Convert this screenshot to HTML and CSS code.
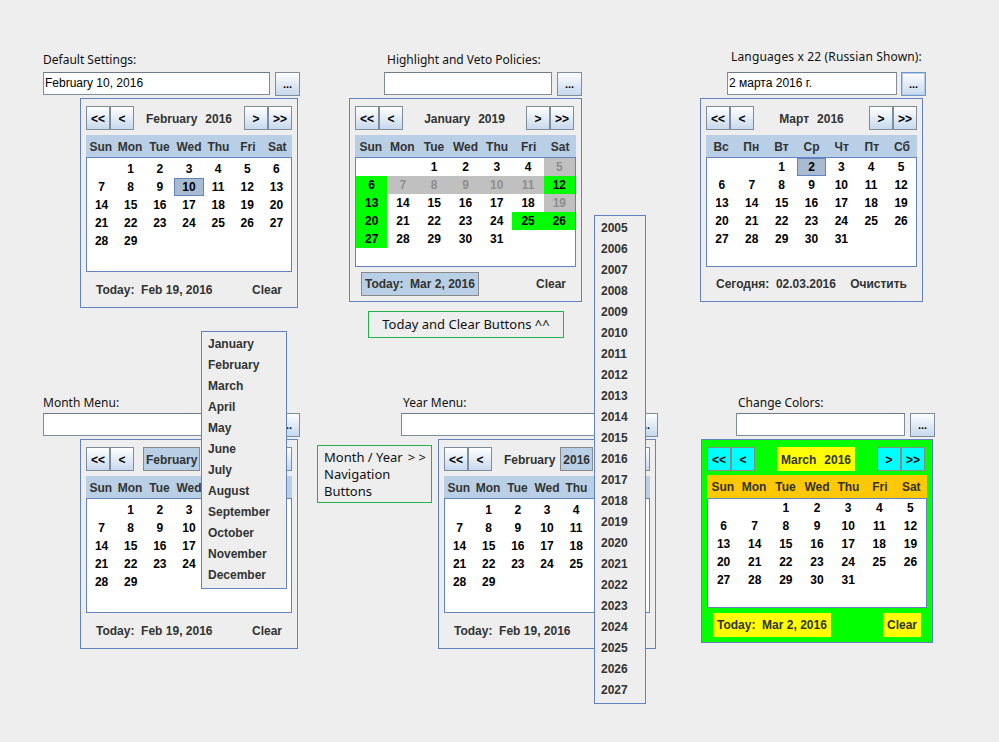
FILE: index.html
```html
<!DOCTYPE html>
<html lang="en">
<head>
<meta charset="utf-8">
<title>Date Picker Demo</title>
<link rel="stylesheet" href="styles.css">
</head>
<body>
<div class="row row1">
  <section class="demo d1">
    <div class="lbl">Default Settings:</div>
    <div class="fieldrow"><div class="field f227">February 10, 2016</div><div class="dots">...</div></div>
    <div class="cal tall w218 ml37">
      <div class="nav">
        <div class="navgrp"><div class="nb">&lt;&lt;</div><div class="nb">&lt;</div></div>
        <div class="my"><span>February</span><span>2016</span></div>
        <div class="navgrp"><div class="nb">&gt;</div><div class="nb">&gt;&gt;</div></div>
      </div>
      <div class="wk"><span>Sun</span><span>Mon</span><span>Tue</span><span>Wed</span><span>Thu</span><span>Fri</span><span>Sat</span></div>
      <div class="days">
        <span></span><span>1</span><span>2</span><span>3</span><span>4</span><span>5</span><span>6</span>
        <span>7</span><span>8</span><span>9</span><span class="sel">10</span><span>11</span><span>12</span><span>13</span>
        <span>14</span><span>15</span><span>16</span><span>17</span><span>18</span><span>19</span><span>20</span>
        <span>21</span><span>22</span><span>23</span><span>24</span><span>25</span><span>26</span><span>27</span>
        <span>28</span><span>29</span>
      </div>
      <div class="foot"><span class="tb">Today:&nbsp; Feb 19, 2016</span><span class="tb">Clear</span></div>
    </div>
  </section>

  <section class="demo d2">
    <div class="lbl">Highlight and Veto Policies:</div>
    <div class="fieldrow"><div class="field f168"></div><div class="dots">...</div></div>
    <div class="cal short w233">
      <div class="nav">
        <div class="navgrp"><div class="nb">&lt;&lt;</div><div class="nb">&lt;</div></div>
        <div class="my"><span>January</span><span>2019</span></div>
        <div class="navgrp"><div class="nb">&gt;</div><div class="nb">&gt;&gt;</div></div>
      </div>
      <div class="wk"><span>Sun</span><span>Mon</span><span>Tue</span><span>Wed</span><span>Thu</span><span>Fri</span><span>Sat</span></div>
      <div class="days">
        <span></span><span></span><span>1</span><span>2</span><span>3</span><span>4</span><span class="v">5</span>
        <span class="g">6</span><span class="v">7</span><span class="v">8</span><span class="v">9</span><span class="v">10</span><span class="v">11</span><span class="g">12</span>
        <span class="g">13</span><span>14</span><span>15</span><span>16</span><span>17</span><span>18</span><span class="v">19</span>
        <span class="g">20</span><span>21</span><span>22</span><span>23</span><span>24</span><span class="g">25</span><span class="g">26</span>
        <span class="g">27</span><span>28</span><span>29</span><span>30</span><span>31</span>
      </div>
      <div class="foot"><span class="tb hl">Today:&nbsp; Mar 2, 2016</span><span class="tb">Clear</span></div>
    </div>
    <div class="note note1">Today and Clear Buttons ^^</div>
  </section>

  <section class="demo d3">
    <div class="lbl">Languages x 22 (Russian Shown):</div>
    <div class="fieldrow g4"><div class="field f170">2 марта 2016 г.</div><div class="dots focus">...</div></div>
    <div class="cal short w223">
      <div class="nav">
        <div class="navgrp"><div class="nb">&lt;&lt;</div><div class="nb">&lt;</div></div>
        <div class="my"><span>Март</span><span>2016</span></div>
        <div class="navgrp"><div class="nb">&gt;</div><div class="nb">&gt;&gt;</div></div>
      </div>
      <div class="wk"><span>Вс</span><span>Пн</span><span>Вт</span><span>Ср</span><span>Чт</span><span>Пт</span><span>Сб</span></div>
      <div class="days">
        <span></span><span></span><span>1</span><span class="sel">2</span><span>3</span><span>4</span><span>5</span>
        <span>6</span><span>7</span><span>8</span><span>9</span><span>10</span><span>11</span><span>12</span>
        <span>13</span><span>14</span><span>15</span><span>16</span><span>17</span><span>18</span><span>19</span>
        <span>20</span><span>21</span><span>22</span><span>23</span><span>24</span><span>25</span><span>26</span>
        <span>27</span><span>28</span><span>29</span><span>30</span><span>31</span>
      </div>
      <div class="foot"><span class="tb">Сегодня:&nbsp; 02.03.2016</span><span class="tb">Очистить</span></div>
    </div>
  </section>
</div>

<div class="row row2">
  <section class="demo d4">
    <div class="lbl">Month Menu:</div>
    <div class="fieldrow"><div class="field f227"></div><div class="dots">...</div></div>
    <div class="cal tall w218 ml37">
      <div class="nav">
        <div class="navgrp"><div class="nb">&lt;&lt;</div><div class="nb">&lt;</div></div>
        <div class="my"><span class="hl">February</span><span>2016</span></div>
        <div class="navgrp"><div class="nb">&gt;</div><div class="nb">&gt;&gt;</div></div>
      </div>
      <div class="wk"><span>Sun</span><span>Mon</span><span>Tue</span><span>Wed</span><span>Thu</span><span>Fri</span><span>Sat</span></div>
      <div class="days">
        <span></span><span>1</span><span>2</span><span>3</span><span>4</span><span>5</span><span>6</span>
        <span>7</span><span>8</span><span>9</span><span>10</span><span>11</span><span>12</span><span>13</span>
        <span>14</span><span>15</span><span>16</span><span>17</span><span>18</span><span>19</span><span>20</span>
        <span>21</span><span>22</span><span>23</span><span>24</span><span>25</span><span>26</span><span>27</span>
        <span>28</span><span>29</span>
      </div>
      <div class="foot"><span class="tb">Today:&nbsp; Feb 19, 2016</span><span class="tb">Clear</span></div>
    </div>
  </section>

  <section class="demo d5">
    <div class="lbl">Year Menu:</div>
    <div class="fieldrow"><div class="field f227"></div><div class="dots">...</div></div>
    <div class="pair">
      <div class="note note2"><div class="nl"><span>Month / Year</span><span>&gt; &gt;</span></div><div>Navigation</div><div>Buttons</div></div>
      <div class="cal tall w218">
        <div class="nav">
          <div class="navgrp"><div class="nb">&lt;&lt;</div><div class="nb">&lt;</div></div>
          <div class="my"><span>February</span><span class="hl">2016</span></div>
          <div class="navgrp"><div class="nb">&gt;</div><div class="nb">&gt;&gt;</div></div>
        </div>
        <div class="wk"><span>Sun</span><span>Mon</span><span>Tue</span><span>Wed</span><span>Thu</span><span>Fri</span><span>Sat</span></div>
        <div class="days">
          <span></span><span>1</span><span>2</span><span>3</span><span>4</span><span>5</span><span>6</span>
          <span>7</span><span>8</span><span>9</span><span>10</span><span>11</span><span>12</span><span>13</span>
          <span>14</span><span>15</span><span>16</span><span>17</span><span>18</span><span>19</span><span>20</span>
          <span>21</span><span>22</span><span>23</span><span>24</span><span>25</span><span>26</span><span>27</span>
          <span>28</span><span>29</span>
        </div>
        <div class="foot"><span class="tb">Today:&nbsp; Feb 19, 2016</span><span class="tb">Clear</span></div>
      </div>
    </div>
  </section>

  <section class="demo d6">
    <div class="lbl">Change Colors:</div>
    <div class="fieldrow"><div class="field f169"></div><div class="dots">...</div></div>
    <div class="cal short w232 colors">
      <div class="nav">
        <div class="navgrp"><div class="nb">&lt;&lt;</div><div class="nb">&lt;</div></div>
        <div class="my"><span>March</span><span>2016</span></div>
        <div class="navgrp"><div class="nb">&gt;</div><div class="nb">&gt;&gt;</div></div>
      </div>
      <div class="wk"><span>Sun</span><span>Mon</span><span>Tue</span><span>Wed</span><span>Thu</span><span>Fri</span><span>Sat</span></div>
      <div class="days">
        <span></span><span></span><span>1</span><span>2</span><span>3</span><span>4</span><span>5</span>
        <span>6</span><span>7</span><span>8</span><span>9</span><span>10</span><span>11</span><span>12</span>
        <span>13</span><span>14</span><span>15</span><span>16</span><span>17</span><span>18</span><span>19</span>
        <span>20</span><span>21</span><span>22</span><span>23</span><span>24</span><span>25</span><span>26</span>
        <span>27</span><span>28</span><span>29</span><span>30</span><span>31</span>
      </div>
      <div class="foot"><span class="tb">Today:&nbsp; Mar 2, 2016</span><span class="tb">Clear</span></div>
    </div>
  </section>
</div>

<div class="popup mpop">
  <div>January</div><div>February</div><div>March</div><div>April</div><div>May</div><div>June</div>
  <div>July</div><div>August</div><div>September</div><div>October</div><div>November</div><div>December</div>
</div>

<div class="popup ypop">
  <div>2005</div><div>2006</div><div>2007</div><div>2008</div><div>2009</div><div>2010</div>
  <div>2011</div><div>2012</div><div>2013</div><div>2014</div><div>2015</div><div>2016</div>
  <div>2017</div><div>2018</div><div>2019</div><div>2020</div><div>2021</div><div>2022</div>
  <div>2023</div><div>2024</div><div>2025</div><div>2026</div><div>2027</div>
</div>
</body>
</html>
```

FILE: styles.css
```css
* { box-sizing: border-box; }
html, body { margin: 0; padding: 0; }
body {
  background: #eeeeee;
  width: 999px;
  height: 742px;
  position: relative;
  overflow: hidden;
  font-family: "Liberation Sans", Arial, sans-serif;
  font-size: 12px;
  color: #000;
}

.row { display: flex; align-items: flex-start; }
.row1 { height: 394px; padding-top: 52px; }

.demo { display: flex; flex-direction: column; align-items: flex-start; flex: none; }
.d1, .d4 { margin-left: 43px; width: 257px; }
.d2 { margin-left: 49px; width: 234px; }
.d3 { margin-left: 117px; width: 226px; }
.d5 { margin-left: 17px; width: 341px; }
.d6 { margin-left: 43px; width: 234px; }

.lbl {
  font-family: "Noto Sans", "Open Sans", sans-serif;
  font-size: 12px;
  line-height: 16px;
  height: 16px;
  margin-bottom: 4px;
  white-space: nowrap;
  color: #111;
}
.row2 .lbl { margin-top: 1px; margin-bottom: 2px; }
.d2 .lbl { margin-left: 38px; }
.d3 .lbl { margin-left: 31px; margin-top: -3px; margin-bottom: 7px; letter-spacing: 0.15px; }
.d5 .lbl { margin-left: 86px; }
.d6 .lbl { margin-left: 37px; }

.fieldrow { display: flex; gap: 5px; height: 24px; }
.fieldrow.g4 { gap: 4px; }
.d2 .fieldrow { margin-left: 35px; }
.d3 .fieldrow { margin-left: 27px; }
.d5 .fieldrow { margin-left: 84px; }
.d6 .fieldrow { margin-left: 35px; }

.field {
  height: 23px;
  border: 1px solid #7f8c99;
  border-top-color: #6f7b88;
  background: #fff;
  padding: 0 1px;
  line-height: 21px;
  font-size: 12px;
  white-space: nowrap;
}
.f227 { width: 227px; }
.f170 { width: 170px; }
.f169 { width: 169px; }
.f168 { width: 168px; }

.dots {
  width: 25px;
  height: 24px;
  border: 1px solid #7f8c99;
  background: linear-gradient(#fdfeff, #c6d8ec);
  text-align: center;
  font-weight: bold;
  font-size: 11px;
  line-height: 22px;
}
.dots.focus { border-color: #6d96cc; box-shadow: inset 0 0 0 1px #b4cce8; }

.cal {
  border: 1px solid #6382bf;
  padding: 7px 5px 0;
  margin-top: 2px;
  display: flex;
  flex-direction: column;
  background: #eeeeee;
  flex: none;
}
.cal.tall { height: 210px; }
.cal.short { height: 204px; }
.w218 { width: 218px; }
.w223 { width: 223px; }
.w232 { width: 232px; }
.w233 { width: 233px; }
.w232 .nav, .w233 .nav { padding-right: 2px; }
.ml37 { margin-left: 37px; }

.nav { display: flex; justify-content: space-between; align-items: center; height: 24px; }
.navgrp { display: flex; }
.nb {
  width: 24px;
  height: 24px;
  border: 1px solid #7f8c99;
  background: linear-gradient(#ffffff, #c7d9ed);
  font-weight: bold;
  text-align: center;
  line-height: 24px;
  color: #000;
}
.my { display: flex; gap: 2px; font-weight: bold; color: #333; }
.my span { padding: 0 2px; border: 1px solid transparent; height: 24px; line-height: 24px; white-space: nowrap; }
.my span.hl { background: #b8cfe5; border-color: #8a8a8a; color: #333; }

.wk {
  margin-top: 5px;
  height: 22px;
  background: #b8cfe5;
  display: grid;
  grid-template-columns: repeat(7, 1fr);
  font-weight: bold;
  color: #333;
  text-align: center;
  line-height: 24px;
}

.days {
  background: #fff;
  border: 1px solid #6382bf;
  display: grid;
  grid-template-columns: repeat(7, 1fr);
  grid-template-rows: repeat(6, 18px);
  align-content: start;
  font-weight: bold;
  text-align: center;
  line-height: 18px;
}
.tall .days { height: 115px; padding-top: 2px; }
.short .days { height: 110px; }
.days .g { background: #00ff00; }
.days .v { background: #c0c0c0; color: #8e8e8e; }
.days .sel { background: #a9bbd1; border: 1px solid #6382bf; line-height: 16px; }

.foot {
  flex: 1;
  display: flex;
  justify-content: space-between;
  align-items: center;
  padding: 0 6px;
}
.tb {
  font-weight: bold;
  color: #333;
  height: 24px;
  line-height: 22px;
  padding: 0 3px;
  border: 1px solid transparent;
  white-space: nowrap;
}
.tb.hl { background: #b8cfe5; border-color: #8a8a8a; }

.colors { background: #00ff00; }
.colors .nb { background: #00ffff; border-color: #8a8a8a; }
.colors .my { background: #ffff00; padding: 0 1px; }
.colors .wk { background: #ffc800; margin-top: 4px; height: 23px; line-height: 25px; }
.colors .tb { background: #ffff00; border-color: #ffff00; }

.note {
  border: 1px solid #22b14c;
  font-family: "Noto Sans", "Open Sans", sans-serif;
  font-size: 13px;
  color: #111;
}
.note1 {
  margin-left: 19px;
  margin-top: 9px;
  width: 196px;
  height: 27px;
  text-align: center;
  line-height: 25px;
}
.pair { display: flex; align-items: flex-start; }
.pair .cal { margin-left: 6px; }
.note2 {
  width: 115px;
  height: 58px;
  margin-top: 8px;
  padding: 3px 5px 0 6px;
  line-height: 17px;
}
.nl { display: flex; justify-content: space-between; }

.popup {
  position: absolute;
  background: #eeeeee;
  border: 1px solid #6382bf;
  padding-top: 2px;
  font-weight: bold;
  color: #333;
}
.popup div { height: 21px; line-height: 21px; padding-left: 6px; white-space: nowrap; }
.mpop { left: 201px; top: 331px; width: 86px; height: 258px; }
.ypop { left: 594px; top: 215px; width: 52px; height: 489px; }
```
